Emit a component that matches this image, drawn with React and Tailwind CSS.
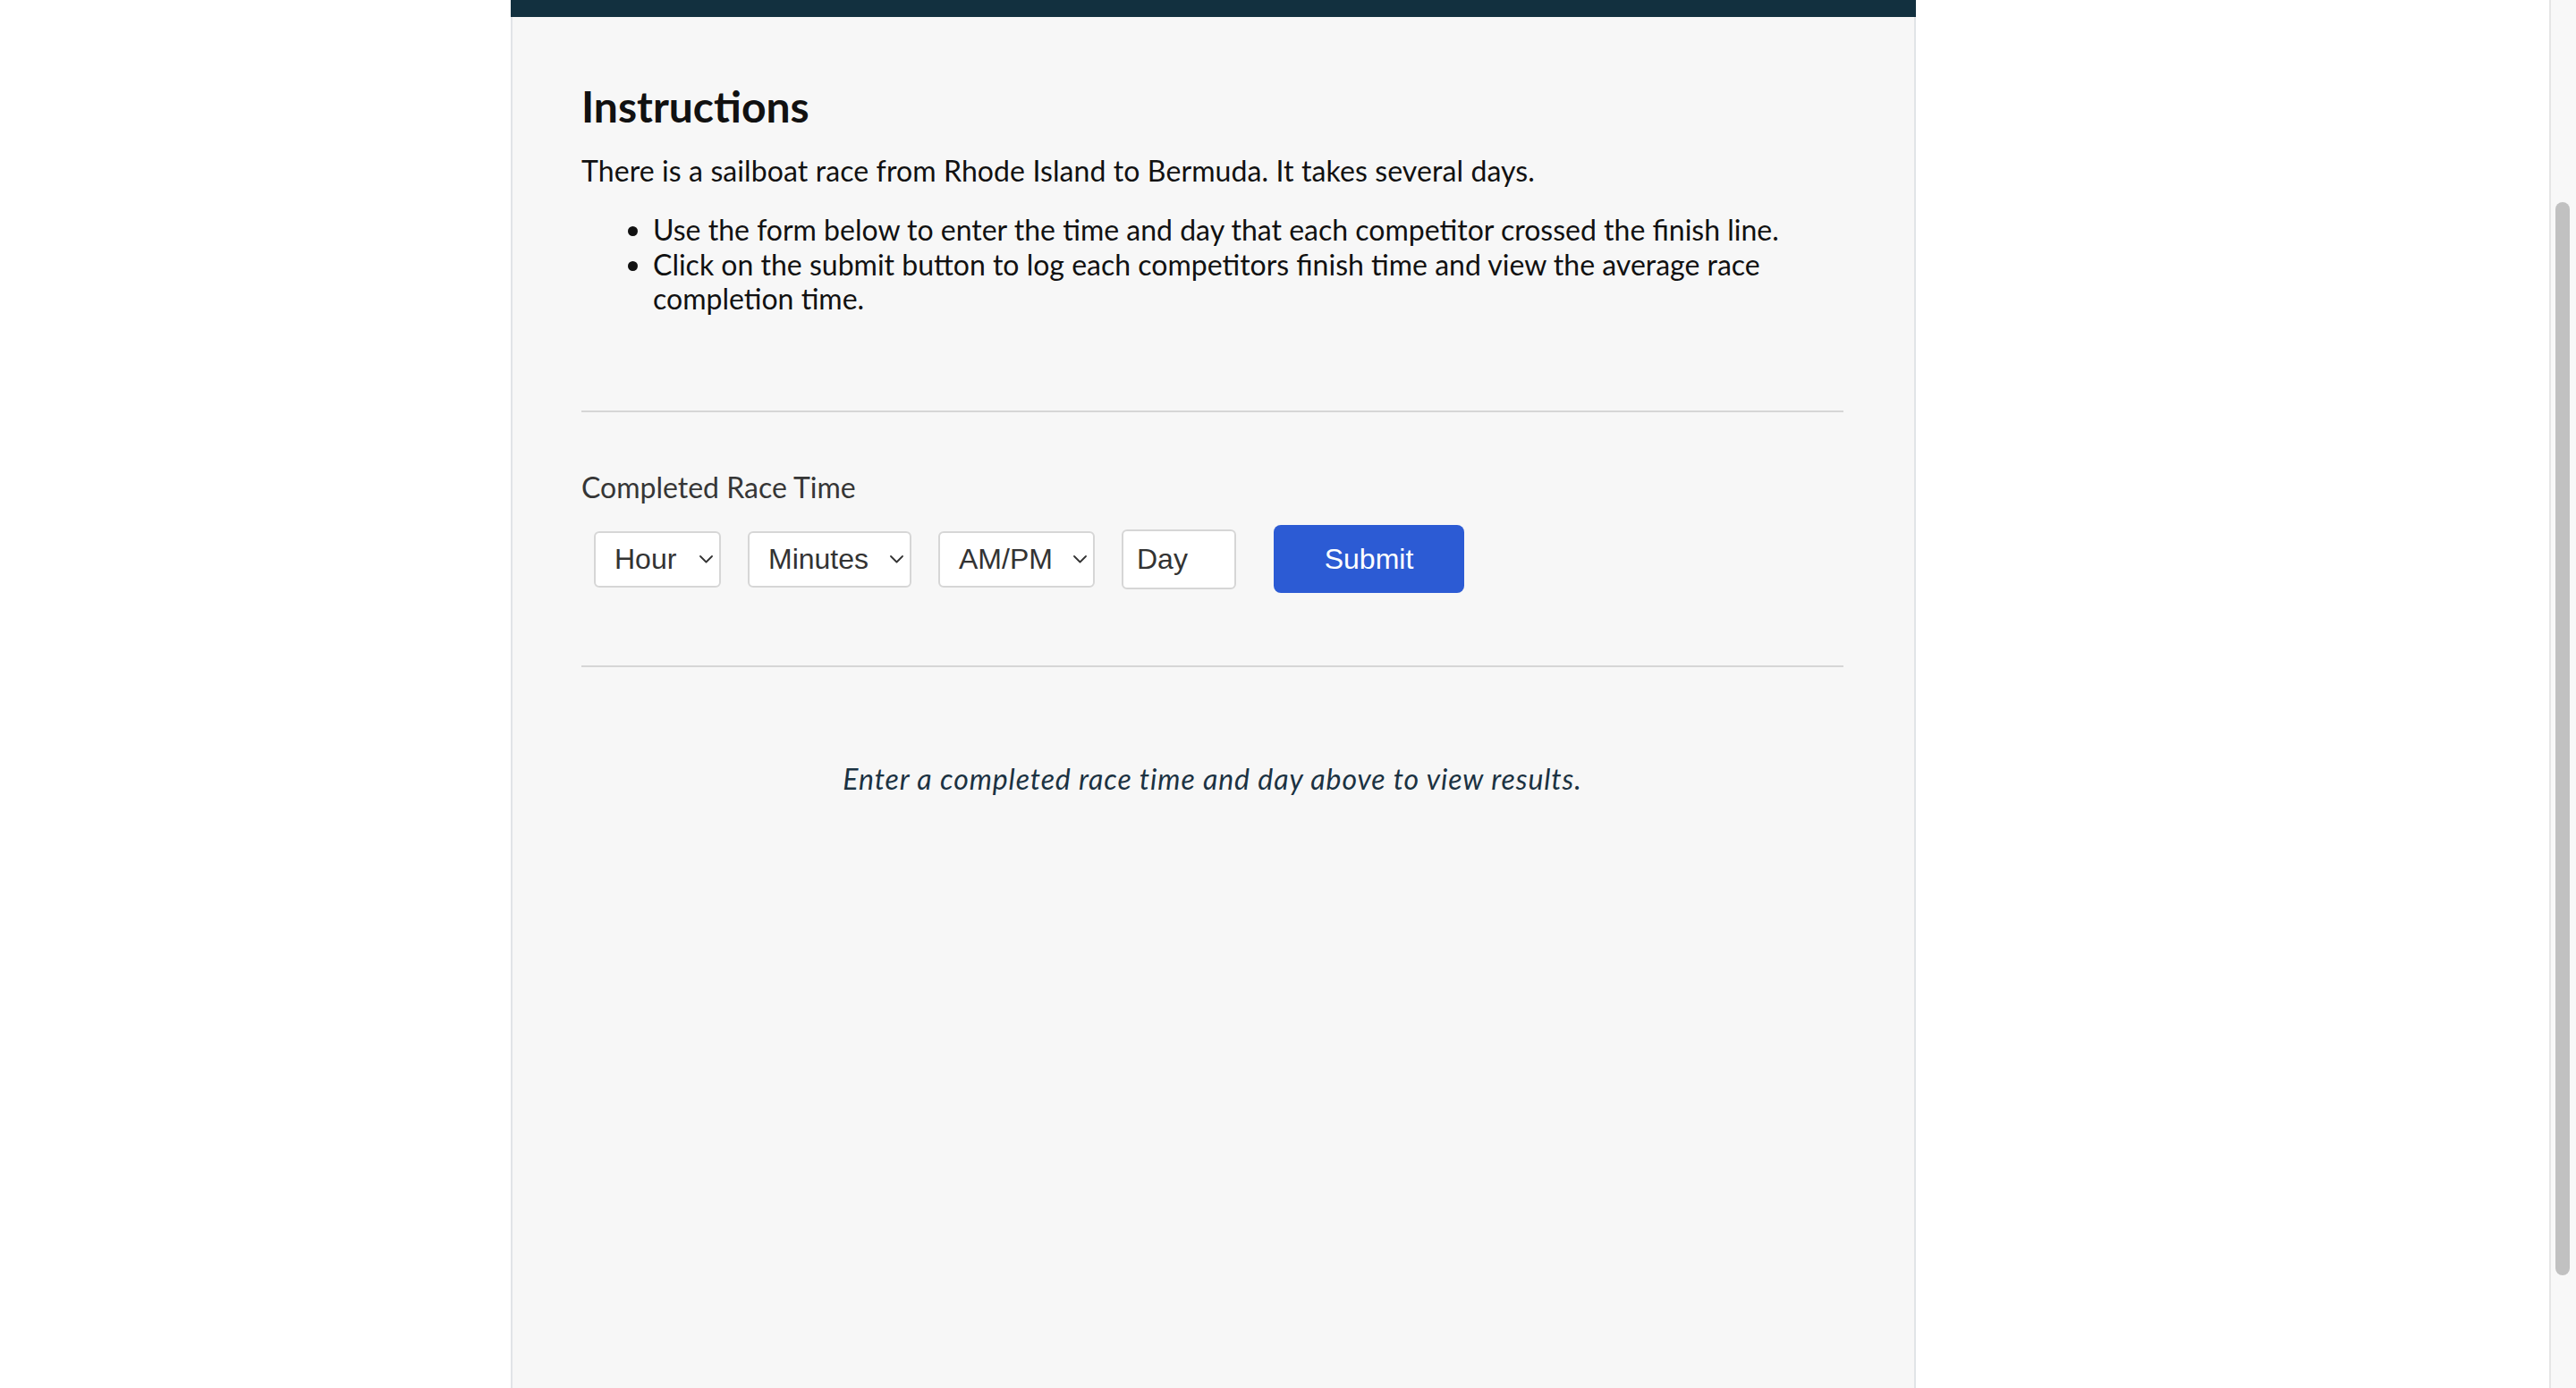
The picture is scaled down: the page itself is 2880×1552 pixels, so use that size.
import React from "react";

const Chevron = () => (
  <svg width="15" height="9" viewBox="0 0 15 9" fill="none" className="shrink-0">
    <polyline points="1,1 7.5,7.5 14,1" stroke="#333333" strokeWidth="1.8" strokeLinecap="round" strokeLinejoin="round" />
  </svg>
);

const FakeSelect = ({ label, width }) => (
  <div
    className={`flex h-[63px] items-center justify-between rounded-[6px] border-2 border-[#d6d6d6] bg-white pl-[21px] pr-[7px] text-[32px] text-[#333333] ${width}`}
    style={{ fontFamily: '"Liberation Sans", Arial, sans-serif' }}
  >
    <span>{label}</span>
    <Chevron />
  </div>
);

const App = () => {
  return (
    <div className="flex h-screen w-full overflow-hidden bg-white">
      <div className="flex-1 pl-[571px]">
        <div
          className="flex h-full w-[1571px] flex-col border-x-2 border-[#e1e4e7] bg-[#f7f7f7]"
          style={{ fontFamily: 'Lato, "Open Sans", sans-serif' }}
        >
          <div className="-mx-[2px] h-[19px] shrink-0 bg-[#12303f]" />

          <div className="pl-[77px] pr-[79px] pt-[71px]">
            <h1 className="text-[48px] font-bold leading-[58px] text-[#111111]">Instructions</h1>
            <p className="mt-[24px] text-[32px] leading-[38.4px] tracking-[0.1px] text-[#111111]">
              There is a sailboat race from Rhode Island to Bermuda. It takes several days.
            </p>
            <ul className="mt-[28px] list-disc pl-[80px] text-[32px] leading-[38.4px] text-[#111111]">
              <li>Use the form below to enter the time and day that each competitor crossed the finish line.</li>
              <li>Click on the submit button to log each competitors finish time and view the average race completion time.</li>
            </ul>

            <div className="mt-[105px] h-[2px] bg-[#d6d6d6]" />

            <div className="mt-[65px] text-[32px] leading-[38.4px] text-[#363636]">Completed Race Time</div>

            <div className="ml-[14px] mt-[23px] flex h-[76px] items-center">
              <FakeSelect label="Hour" width="w-[142px]" />
              <div className="ml-[30px]">
                <FakeSelect label="Minutes" width="w-[183px]" />
              </div>
              <div className="ml-[30px]">
                <FakeSelect label="AM/PM" width="w-[175px]" />
              </div>
              <div
                className="ml-[30px] flex h-[67px] w-[128px] items-center rounded-[6px] border-2 border-[#d6d6d6] bg-white pl-[15px] text-[32px] text-[#333333]"
                style={{ fontFamily: '"Liberation Sans", Arial, sans-serif' }}
              >
                Day
              </div>
              <button
                className="ml-[42px] flex h-[76px] w-[213px] items-center justify-center rounded-[8px] bg-[#2c5bd4] text-[32px] text-white"
                style={{ fontFamily: '"Liberation Sans", Arial, sans-serif' }}
              >
                Submit
              </button>
            </div>

            <div className="mt-[81px] h-[2px] bg-[#d6d6d6]" />

            <p className="mt-[106px] text-center text-[32px] italic leading-[38.4px] tracking-[0.9px] text-[#1b3242]">
              Enter a completed race time and day above to view results.
            </p>
          </div>
        </div>
      </div>

      {/* scrollbar */}
      <div className="flex h-full w-[30px] shrink-0 justify-center border-l-2 border-[#e6e6e6] bg-[#f8f8f8] pl-[4px] pr-[6px]">
        <div className="mt-[226px] h-[1200px] w-[16px] rounded-full bg-[#c1c1c1]" />
      </div>
    </div>
  );
};

export default App;
